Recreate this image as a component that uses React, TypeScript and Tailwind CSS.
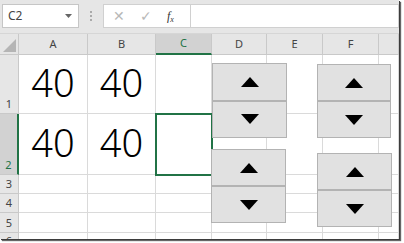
import React from 'react';

const COLS = ['A', 'B', 'C', 'D', 'E', 'F', ''];
const ROWS = ['1', '2', '3', '4', '5', '6'];

const cellBorder = 'border-r border-b border-[#dadada]';
const headBorder = 'border-r border-b border-[#c9c9c9]';

const Spinner: React.FC<{ className: string }> = ({ className }) => (
  <div className={`absolute flex flex-col ${className}`}>
    <div className="flex-1 flex items-center justify-center bg-[#e1e1e1] border border-[#b3b3b3]">
      <svg width="18" height="10" viewBox="0 0 18 10">
        <polygon points="9,0 18,10 0,10" fill="#000" />
      </svg>
    </div>
    <div className="flex-1 flex items-center justify-center bg-[#e1e1e1] border border-[#b3b3b3]">
      <svg width="18" height="10" viewBox="0 0 18 10">
        <polygon points="0,0 18,0 9,10" fill="#000" />
      </svg>
    </div>
  </div>
);

const App: React.FC = () => {
  const value = (row: number, col: number) => (row <= 1 && col <= 1 ? '40' : '');

  return (
    <div className="w-[404px] h-[243px] bg-white font-['Noto_Sans',sans-serif]">
      <div className="relative w-[399px] h-[239px] overflow-hidden bg-white shadow-[1px_1px_0_#3c3c3c,2px_2px_1px_rgba(0,0,0,0.6)]">
        {/* formula bar */}
        <div className="h-[34px] bg-[#e6e6e6] border-b border-[#d6d6d6] flex items-start pt-[4px] pl-[2px]">
          <div className="w-[77px] h-[24px] bg-white border border-[#c6c6c6] flex items-center justify-between pl-[5px] pr-[6px]">
            <span className="text-[12px] text-[#444]">C2</span>
            <svg width="7" height="4" viewBox="0 0 7 4">
              <polygon points="0,0 7,0 3.5,4" fill="#666" />
            </svg>
          </div>
          <div className="w-[24px] h-[24px] flex flex-col items-center justify-center gap-[2px]">
            <span className="w-[2px] h-[2px] bg-[#aaa]" />
            <span className="w-[2px] h-[2px] bg-[#aaa]" />
            <span className="w-[2px] h-[2px] bg-[#aaa]" />
          </div>
          <div className="w-[88px] h-[24px] bg-white border border-[#d0d0d0] flex items-center pl-[9px] gap-[15px]">
            <span className="text-[14px] text-[#b8b8b8] leading-none">✕</span>
            <span className="text-[14px] text-[#b8b8b8] leading-none">✓</span>
            <span className="text-[12px] text-[#333] italic font-['Liberation_Serif',serif] leading-none">
              f<sub className="text-[8px]">x</sub>
            </span>
          </div>
          <div className="flex-1 h-[24px] bg-white border border-l-0 border-[#d0d0d0]" />
        </div>

        {/* sheet grid */}
        <div className="grid grid-cols-[19px_69px_68px_56px_55px_56px_56px_1fr] grid-rows-[21px_59px_61px_19px_19px_20px_1fr]">
          <div className={`bg-[#e6e6e6] ${headBorder} flex items-end justify-end pr-[2px] pb-[2px]`}>
            <svg width="13" height="13" viewBox="0 0 13 13">
              <polygon points="13,0 13,13 0,13" fill="#b5b5b5" />
            </svg>
          </div>
          {COLS.map((c, i) => (
            <div
              key={`h${i}`}
              className={
                c === 'C'
                  ? 'bg-[#d2d2d2] border-r border-[#c9c9c9] border-b-2 border-b-[#217346] flex items-center justify-center text-[11px] text-[#217346]'
                  : `bg-[#e6e6e6] ${headBorder} flex items-center justify-center text-[11px] text-[#444]`
              }
            >
              {c}
            </div>
          ))}
          {ROWS.map((r, ri) => (
            <React.Fragment key={r}>
              <div
                className={
                  r === '2'
                    ? 'bg-[#d2d2d2] border-b border-[#c9c9c9] border-r-2 border-r-[#217346] flex items-end justify-center text-[11px] text-[#217346] pb-[1px]'
                    : `bg-[#e6e6e6] ${headBorder} flex items-end justify-center text-[11px] text-[#444] pb-[1px]`
                }
              >
                {r}
              </div>
              {COLS.map((_, ci) => (
                <div
                  key={ci}
                  className={`${cellBorder} flex items-end justify-center ${ri === 0 ? 'pb-[12px]' : 'pb-[13px]'}`}
                >
                  <span className="text-[38px] font-light leading-none text-black">{value(ri, ci)}</span>
                </div>
              ))}
            </React.Fragment>
          ))}
        </div>

        {/* active cell */}
        <div className="absolute left-[155px] top-[113px] w-[58px] h-[63px] border-2 border-[#217346]" />

        <Spinner className="left-[212px] top-[63px] w-[75px] h-[75px]" />
        <Spinner className="left-[317px] top-[64px] w-[74px] h-[74px]" />
        <Spinner className="left-[211px] top-[149px] w-[75px] h-[74px]" />
        <Spinner className="left-[317px] top-[153px] w-[75px] h-[74px]" />
      </div>
    </div>
  );
};

export default App;
